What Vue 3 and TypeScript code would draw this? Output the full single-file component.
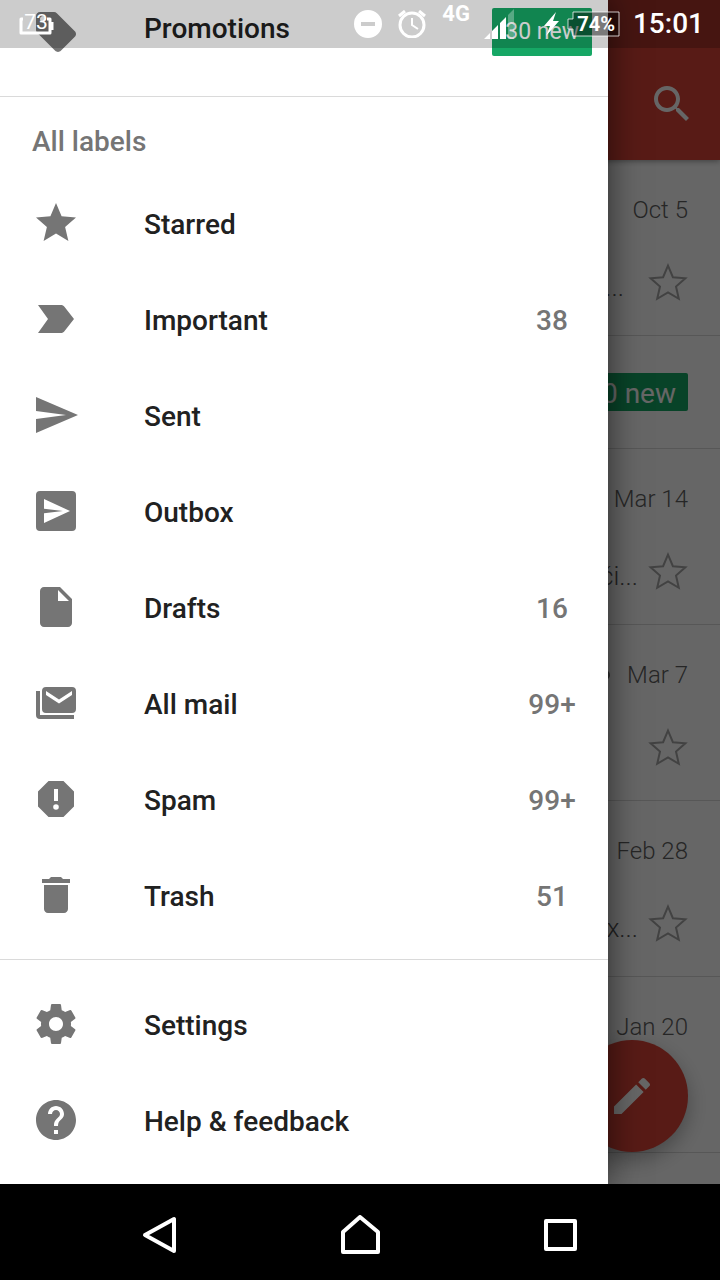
<script setup lang="ts">
interface DrawerItem {
  label: string
  icon: string
  count?: string
}

interface MailRow {
  date: string
  snippet: string
  clip?: boolean
}

const icons: Record<string, string> = {
  star: 'M12 17.3l6.2 3.7-1.65-7.03L22 9.24l-7.2-.62L12 2 9.2 8.62 2 9.24l5.45 4.73L5.8 21z',
  important: 'M3 5h11.4c.8 0 1.4.3 1.8.9L21 12l-4.8 6.1c-.4.6-1 .9-1.8.9H3l5-7z',
  sent: 'M2 21l21-9L2 3v7l15 2-15 2z',
  outbox:
    'M4 2h16a2 2 0 0 1 2 2v16a2 2 0 0 1-2 2H4a2 2 0 0 1-2-2V4a2 2 0 0 1 2-2zM6 6v4.9l9.5 1.1L6 13.1V18l13-6z',
  draft:
    'M6 2c-1.1 0-2 .9-2 2v16c0 1.1.9 2 2 2h12c1.1 0 2-.9 2-2V8l-6-6H6zm7 7V3.5L18.5 9H13z',
  allMail:
    'M2 6h2v12h17v2H4a2 2 0 0 1-2-2zM7 4h13a2 2 0 0 1 2 2v9a2 2 0 0 1-2 2H7a2 2 0 0 1-2-2V6a2 2 0 0 1 2-2zM7 6v2l6.5 4.2L20 8V6l-6.5 4.2z',
  spam:
    'M15.73 3H8.27L3 8.27v7.46L8.27 21h7.46L21 15.73V8.27zM12 17.4a1.4 1.4 0 1 1 0-2.8 1.4 1.4 0 0 1 0 2.8zM13 13h-2V7h2z',
  trash: 'M6 19c0 1.1.9 2 2 2h8c1.1 0 2-.9 2-2V7H6zM19 4h-3.5l-1-1h-5l-1 1H5v2h14z',
  settings:
    'M19.43 12.98c.04-.32.07-.64.07-.98s-.03-.66-.07-.98l2.11-1.65c.19-.15.24-.42.12-.64l-2-3.46c-.12-.22-.39-.3-.61-.22l-2.49 1c-.52-.4-1.08-.73-1.69-.98l-.38-2.65C14.46 2.18 14.25 2 14 2h-4c-.25 0-.46.18-.49.42l-.38 2.65c-.61.25-1.17.59-1.69.98l-2.49-1c-.23-.09-.49 0-.61.22l-2 3.46c-.13.22-.07.49.12.64l2.11 1.65c-.04.32-.07.65-.07.98s.03.66.07.98l-2.11 1.65c-.19.15-.24.42-.12.64l2 3.46c.12.22.39.3.61.22l2.49-1c.52.4 1.08.73 1.69.98l.38 2.65c.03.24.24.42.49.42h4c.25 0 .46-.18.49-.42l.38-2.65c.61-.25 1.17-.59 1.69-.98l2.49 1c.23.09.49 0 .61-.22l2-3.46c.12-.22.07-.49-.12-.64zM12 15.5c-1.93 0-3.5-1.57-3.5-3.5s1.57-3.5 3.5-3.5 3.5 1.57 3.5 3.5-1.57 3.5-3.5 3.5z',
  help:
    'M12 2C6.48 2 2 6.48 2 12s4.48 10 10 10 10-4.48 10-10S17.52 2 12 2zm1 17h-2v-2h2zm2.07-7.75l-.9.92C13.45 12.9 13 13.5 13 15h-2v-.5c0-1.1.45-2.1 1.17-2.83l1.24-1.26c.37-.36.59-.86.59-1.41 0-1.1-.9-2-2-2s-2 .9-2 2H8c0-2.21 1.79-4 4-4s4 1.79 4 4c0 .88-.36 1.68-.93 2.25z',
  tag:
    'M21.41 11.58l-9-9C12.05 2.22 11.55 2 11 2H4c-1.1 0-2 .9-2 2v7c0 .55.22 1.05.59 1.42l9 9c.36.36.86.58 1.41.58s1.05-.22 1.41-.59l7-7c.37-.36.59-.86.59-1.41s-.23-1.06-.59-1.42zM5.5 7C4.67 7 4 6.33 4 5.5S4.67 4 5.5 4 7 4.67 7 5.5 6.33 7 5.5 7z',
  search:
    'M15.5 14h-.79l-.28-.27C15.41 12.59 16 11.11 16 9.5 16 5.91 13.09 3 9.5 3S3 5.91 3 9.5 5.91 16 9.5 16c1.61 0 3.09-.59 4.23-1.57l.27.28v.79l5 4.99L20.49 19zm-6 0C7.01 14 5 11.99 5 9.5S7.01 5 9.5 5 14 7.01 14 9.5 11.99 14 9.5 14z',
  starOutline:
    'M12 3.3l2.45 5.8 6.25.5L16 13.75l1.4 6.15-5.4-3.25-5.4 3.25L8 13.75 3.3 9.6l6.25-.5z',
  pencil:
    'M3 17.25V21h3.75L17.81 9.94l-3.75-3.75zM20.71 7.04c.39-.39.39-1.02 0-1.41l-2.34-2.34c-.39-.39-1.02-.39-1.41 0l-1.83 1.83 3.75 3.75z',
}

const labels: DrawerItem[] = [
  { label: 'Starred', icon: 'star' },
  { label: 'Important', icon: 'important', count: '38' },
  { label: 'Sent', icon: 'sent' },
  { label: 'Outbox', icon: 'outbox' },
  { label: 'Drafts', icon: 'draft', count: '16' },
  { label: 'All mail', icon: 'allMail', count: '99+' },
  { label: 'Spam', icon: 'spam', count: '99+' },
  { label: 'Trash', icon: 'trash', count: '51' },
]

const extras: DrawerItem[] = [
  { label: 'Settings', icon: 'settings' },
  { label: 'Help & feedback', icon: 'help' },
]

const firstMail: MailRow = { date: 'Oct 5', snippet: '...' }
const mails: MailRow[] = [
  { date: 'Mar 14', snippet: 'či...' },
  { date: 'Mar 7', snippet: '', clip: true },
  { date: 'Feb 28', snippet: 'x...' },
  { date: 'Jan 20', snippet: '' },
]
</script>

<template>
  <div class="phone">
    <div class="stage">
      <main class="inbox">
        <header class="toolbar">
          <button class="icon-button" aria-label="Search">
            <svg class="icon" viewBox="0 0 24 24"><path :d="icons.search" /></svg>
          </button>
        </header>
        <article class="mail">
          <div class="mail-top">
            <time>{{ firstMail.date }}</time>
          </div>
          <div class="mail-bottom">
            <span class="snippet inset">{{ firstMail.snippet }}</span>
            <button class="star" aria-label="Star">
              <svg class="icon" viewBox="0 0 24 24"><path :d="icons.starOutline" /></svg>
            </button>
          </div>
        </article>
        <div class="section-row"><span class="badge large">30 new</span></div>
        <article v-for="mail in mails" :key="mail.date" class="mail">
          <div class="mail-top">
            <svg v-if="mail.clip" class="clip" viewBox="0 0 16 16">
              <path d="M2 12h8a4 4 0 0 0 0-8H3" />
            </svg>
            <time>{{ mail.date }}</time>
          </div>
          <div class="mail-bottom">
            <span class="snippet">{{ mail.snippet }}</span>
            <button class="star" aria-label="Star">
              <svg class="icon" viewBox="0 0 24 24"><path :d="icons.starOutline" /></svg>
            </button>
          </div>
        </article>
      </main>

      <button class="fab" aria-label="Compose">
        <svg class="icon" viewBox="0 0 24 24"><path :d="icons.pencil" /></svg>
      </button>

      <div class="scrim"></div>

      <nav class="drawer">
        <div class="group">
          <button class="item promo">
            <svg class="icon" viewBox="0 0 24 24"><path fill-rule="evenodd" :d="icons.tag" /></svg>
            <span class="label">Promotions</span>
            <span class="badge">30 new</span>
          </button>
        </div>
        <section class="group bordered">
          <h2>All labels</h2>
          <button v-for="item in labels" :key="item.label" class="item">
            <svg class="icon" viewBox="0 0 24 24">
              <path fill-rule="evenodd" :d="icons[item.icon]" />
            </svg>
            <span class="label">{{ item.label }}</span>
            <span v-if="item.count" class="count">{{ item.count }}</span>
          </button>
        </section>
        <div class="group bordered extras">
          <button v-for="item in extras" :key="item.label" class="item">
            <svg class="icon" viewBox="0 0 24 24">
              <path fill-rule="evenodd" :d="icons[item.icon]" />
            </svg>
            <span class="label">{{ item.label }}</span>
          </button>
        </div>
      </nav>

      <div class="status">
        <div class="level">
          <svg viewBox="0 0 36 20" fill="none" stroke="#fff" stroke-width="3" stroke-linejoin="round">
            <path d="M5 3H3v14h29V3h-3" />
            <path d="M34 6v8" />
          </svg>
          <span>73</span>
        </div>
        <div class="indicators">
          <svg class="round" viewBox="0 0 28 28">
            <path fill="#fff" fill-rule="evenodd" d="M14 0a14 14 0 1 1 0 28 14 14 0 0 1 0-28zM7 12v4h14v-4z" />
          </svg>
          <svg class="round" viewBox="0 0 28 28" fill="none" stroke="#fff">
            <circle cx="14" cy="15" r="12" stroke-width="3" />
            <path d="M14 8v7l6 4" stroke-width="2" />
            <path d="M1 6l6-5M27 6l-6-5" stroke-width="3" />
          </svg>
          <span class="network">4G</span>
          <svg class="signal" viewBox="0 0 30 30" fill="#fff">
            <path d="M0 30l6-6v6zM8 22l6-6v14H8zM16 14l6-6v22h-6z" />
            <path opacity=".3" d="M24 6l6-6v30h-6z" />
          </svg>
          <svg class="bolt" viewBox="0 0 15 24"><path fill="#fff" d="M12 0L0 14h6L2 24 15 9H9z" /></svg>
          <div class="battery">
            <svg viewBox="0 0 53 26">
              <path d="M6 1h46v24H6v-7H1V8h5z" fill="#000" fill-opacity=".4" stroke="#fff" stroke-opacity=".75" />
            </svg>
            <span>74%</span>
          </div>
          <time class="clock">15:01</time>
        </div>
      </div>
    </div>

    <nav class="system">
      <button aria-label="Back">
        <svg viewBox="0 0 40 40"><path d="M34 4v32L5 20z" /></svg>
      </button>
      <button aria-label="Home">
        <svg viewBox="0 0 40 40"><path d="M20 2L3 17v20h35V17z" /></svg>
      </button>
      <button aria-label="Recent apps">
        <svg viewBox="0 0 40 40"><path d="M6 6h29v28H6z" /></svg>
      </button>
    </nav>
  </div>
</template>

<style>
body {
  margin: 0;
}
</style>

<style scoped>
.phone {
  display: flex;
  flex-direction: column;
  height: 100vh;
  overflow: hidden;
  font-family: Roboto, 'Noto Sans', sans-serif;
  background: #000;
}
button {
  margin: 0;
  padding: 0;
  border: 0;
  background: none;
  color: inherit;
  font: inherit;
  text-align: left;
}
svg {
  display: block;
}
.icon {
  flex: none;
  width: 48px;
  height: 48px;
  fill: currentColor;
}
.stage {
  position: relative;
  flex: 1;
  min-height: 0;
  overflow: hidden;
  background: #fff;
}
.toolbar {
  position: relative;
  display: flex;
  justify-content: flex-end;
  align-items: center;
  height: 112px;
  padding: 48px 24px 0;
  background: #db4437;
  color: #fff;
  box-shadow: 0 1px 6px rgba(0, 0, 0, 0.4);
}
.mail {
  box-sizing: border-box;
  height: 176px;
  padding: 34px 32px 0;
  border-bottom: 1px solid #dadada;
}
.mail-top {
  display: flex;
  justify-content: flex-end;
  align-items: center;
  gap: 16px;
  height: 32px;
  color: #5f5f5f;
  font-size: 24px;
  font-weight: 300;
}
.clip {
  width: 16px;
  height: 16px;
  fill: none;
  stroke: #777;
  stroke-width: 2;
}
.mail-bottom {
  display: flex;
  justify-content: flex-end;
  align-items: center;
  height: 48px;
  margin: 33px -4px 0 0;
}
.snippet {
  padding: 8px 6px 0 0;
  color: #555;
  font-size: 26px;
  font-weight: 300;
}
.snippet.inset {
  padding-right: 20px;
}
.star {
  color: #a6a6a6;
}
.star .icon {
  fill: none;
  stroke: currentColor;
}
.section-row {
  box-sizing: border-box;
  display: flex;
  justify-content: flex-end;
  align-items: center;
  height: 113px;
  padding: 0 32px;
  border-bottom: 1px solid #dadada;
}
.badge {
  height: 48px;
  padding: 0 13px;
  border-radius: 2px;
  background: #16a765;
  color: #fff;
  font-size: 23px;
  font-weight: 400;
  line-height: 48px;
}
.badge.large {
  height: 38px;
  padding: 0 12px;
  font-size: 28px;
  line-height: 42px;
}
.fab {
  position: absolute;
  right: 32px;
  bottom: 32px;
  display: flex;
  justify-content: center;
  align-items: center;
  width: 112px;
  height: 112px;
  border-radius: 50%;
  background: #db4437;
  color: #fff;
  box-shadow: 0 8px 20px rgba(0, 0, 0, 0.3);
}
.scrim {
  position: absolute;
  inset: 0;
  background: rgba(0, 0, 0, 0.6);
}
.drawer {
  position: absolute;
  inset: 0 112px 0 0;
  display: flex;
  flex-direction: column;
  justify-content: flex-end;
  background: #fff;
  color: #212121;
  box-shadow: 0 0 32px rgba(0, 0, 0, 0.6);
  clip-path: inset(0 -48px 0 0);
}
.group {
  flex: none;
  padding-bottom: 16px;
}
.bordered {
  border-top: 1px solid #dadada;
}
.extras {
  padding-top: 16px;
}
h2 {
  box-sizing: border-box;
  height: 78px;
  margin: 0;
  padding: 12px 32px 0;
  color: #757575;
  font-size: 28px;
  font-weight: 500;
  line-height: 66px;
}
.item {
  display: flex;
  align-items: center;
  width: 100%;
  height: 96px;
  padding-left: 32px;
  font-size: 28px;
  font-weight: 500;
}
.item .icon {
  color: #757575;
}
.label {
  flex: 1;
  padding: 2px 0 0 64px;
}
.promo {
  padding-right: 16px;
}
.promo .label {
  padding: 0 0 8px 64px;
}
.count {
  width: 112px;
  padding-top: 2px;
  color: #757575;
  text-align: center;
}
.status {
  position: absolute;
  inset: 0 0 auto;
  display: flex;
  justify-content: space-between;
  align-items: center;
  height: 48px;
  padding: 0 16px 0 18px;
  background: rgba(0, 0, 0, 0.2);
  color: #fff;
}
.level {
  position: relative;
  width: 36px;
  height: 36px;
}
.level svg {
  width: 36px;
  height: 20px;
  margin-top: 10px;
}
.level span {
  position: absolute;
  inset: 4px 0 auto;
  font-size: 21px;
  line-height: 24px;
  text-align: center;
}
.indicators {
  display: flex;
  align-items: center;
}
.round {
  width: 28px;
  height: 28px;
  margin-right: 16px;
}
.network {
  height: 48px;
  margin-right: 14px;
  font-size: 22px;
  font-weight: 700;
  line-height: 28px;
}
.signal {
  width: 30px;
  height: 30px;
  margin-right: 30px;
}
.bolt {
  width: 15px;
  height: 24px;
  margin-right: 8px;
}
.battery {
  position: relative;
  width: 53px;
  height: 26px;
  margin-right: 13px;
}
.battery span {
  position: absolute;
  inset: 0 5px 0 auto;
  font-size: 20px;
  font-weight: 700;
  line-height: 26px;
}
.clock {
  font-size: 28px;
  font-weight: 500;
  line-height: 50px;
}
.system {
  display: flex;
  flex: none;
  height: 96px;
  padding: 0 60px;
  background: #000;
}
.system button {
  display: flex;
  flex: 1;
  justify-content: center;
  align-items: center;
  padding-top: 6px;
}
.system svg {
  width: 40px;
  height: 40px;
  fill: none;
  stroke: #fff;
  stroke-width: 4;
  stroke-linejoin: round;
}
</style>
